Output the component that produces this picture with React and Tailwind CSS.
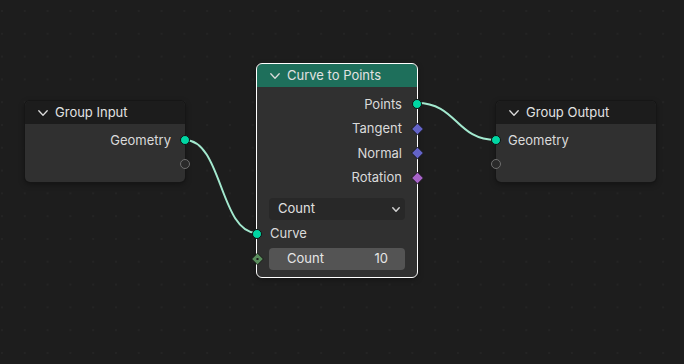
function Diamond({ color, dot }) {
  return (
    <svg width="13" height="13" viewBox="0 0 13 13" className="block">
      <polygon points="6.5,0.6 12.4,6.5 6.5,12.4 0.6,6.5" fill={color} stroke="#141414" strokeWidth="0.9" />
      {dot && <rect x="5.5" y="5.5" width="2" height="2" fill="#1a1a1a" />}
    </svg>
  );
}

function Socket({ type, side }) {
  const pos = side === 'left' ? 'left-[-5px]' : 'right-[-5px]';
  if (type === 'geo')
    return <span className={`absolute ${pos} top-1/2 -translate-y-1/2 w-[10px] h-[10px] rounded-full bg-[#00d6a3] border border-[#101010]`} />;
  if (type === 'empty')
    return <span className={`absolute ${pos} top-1/2 -translate-y-1/2 w-[10px] h-[10px] rounded-full bg-[#2a2a2a] border-[1.5px] border-[#6e6e6e]`} />;
  const dpos = side === 'left' ? 'left-[-6.5px]' : 'right-[-6.5px]';
  const color = type === 'vec' ? '#6363c7' : type === 'rot' ? '#a663c7' : '#598c5c';
  return (
    <span className={`absolute ${dpos} top-1/2 -translate-y-1/2`}>
      <Diamond color={color} dot={type === 'int'} />
    </span>
  );
}

function Chevron({ w = 10, h = 6, sw = 1.3, color = '#dcdcdc' }) {
  return (
    <svg width={w} height={h} viewBox={`0 0 ${w} ${h}`} className="block shrink-0">
      <polyline points={`0.8,0.8 ${w / 2},${h - 0.8} ${w - 0.8},0.8`} fill="none" stroke={color} strokeWidth={sw} strokeLinecap="round" strokeLinejoin="round" />
    </svg>
  );
}

function Header({ title, green }) {
  return (
    <div className={`h-[23px] flex items-center gap-[7px] pl-[13px] rounded-t-[5px] ${green ? 'bg-[#1e6f5b]' : 'bg-[#1c1c1c]'}`}>
      <Chevron />
      <span className="text-[13px] text-[#e2e2e2]">{title}</span>
    </div>
  );
}

export default function App() {
  return (
    <div
      className="relative w-[684px] h-[364px] overflow-hidden bg-[#1d1d1d] bg-[radial-gradient(circle_at_1px_1px,#242424_1px,transparent_1.4px)] bg-[size:22.8px_22.8px] bg-[position:1px_10px]"
      style={{ fontFamily: 'Inter, "Noto Sans", sans-serif' }}
    >
      <svg className="absolute inset-0" width="684" height="364">
        <path d="M185 140 C 222 140, 220 233, 257 233" fill="none" stroke="#a3e9cf" strokeWidth="2" />
        <path d="M417 103 C 457 103, 456 140, 496 140" fill="none" stroke="#a3e9cf" strokeWidth="2" />
      </svg>

      {/* Group Input */}
      <div className="absolute left-[25px] top-[101px] w-[160px] rounded-[5px] bg-[#303030] shadow-[0_0_0_1px_#161616,0_2px_6px_rgba(0,0,0,0.4)]">
        <Header title="Group Input" />
        <div className="pt-[4px] pb-[6px]">
          <div className="relative h-[24px] flex items-center justify-end pr-[14px] pt-[1px] text-[13px] text-[#dadada]">
            Geometry
            <Socket type="geo" side="right" />
          </div>
          <div className="relative h-[24px]">
            <Socket type="empty" side="right" />
          </div>
        </div>
      </div>

      {/* Curve to Points */}
      <div className="absolute left-[257px] top-[64px] w-[160px] rounded-[5px] bg-[#303030] outline outline-1 outline-white shadow-[0_2px_6px_rgba(0,0,0,0.4)]">
        <Header title="Curve to Points" green />
        <div className="pt-[5px] pb-[7px] text-[13px] text-[#dadada]">
          {[
            ['Points', 'geo'],
            ['Tangent', 'vec'],
            ['Normal', 'vec'],
            ['Rotation', 'rot'],
          ].map(([label, t]) => (
            <div key={label} className="relative h-[24.5px] flex items-center justify-end pr-[15px]">
              {label}
              <Socket type={t} side="right" />
            </div>
          ))}
          <div className="mt-[8px] mx-[12px] h-[22px] rounded-[4px] bg-[#282828] flex items-center justify-between pl-[9px] pr-[5px] text-[#e0e0e0]">
            <span>Count</span>
            <Chevron w={8} h={5} sw={1.5} color="#d0d0d0" />
          </div>
          <div className="relative mt-[2px] h-[24px] flex items-center pl-[13px]">
            Curve
            <Socket type="geo" side="left" />
          </div>
          <div className="relative mt-[2px] h-[22px]">
            <Socket type="int" side="left" />
            <div className="mx-[12px] h-[22px] rounded-[4px] bg-[#545454] flex items-center justify-between pl-[18px] pr-[17px] text-[#e6e6e6]">
              <span>Count</span>
              <span>10</span>
            </div>
          </div>
        </div>
      </div>

      {/* Group Output */}
      <div className="absolute left-[496px] top-[101px] w-[160px] rounded-[5px] bg-[#303030] shadow-[0_0_0_1px_#161616,0_2px_6px_rgba(0,0,0,0.4)]">
        <Header title="Group Output" />
        <div className="pt-[4px] pb-[6px] text-[13px] text-[#dadada]">
          <div className="relative h-[24px] flex items-center pl-[12px] pt-[1px]">
            Geometry
            <Socket type="geo" side="left" />
          </div>
          <div className="relative h-[24px]">
            <Socket type="empty" side="left" />
          </div>
        </div>
      </div>
    </div>
  );
}
